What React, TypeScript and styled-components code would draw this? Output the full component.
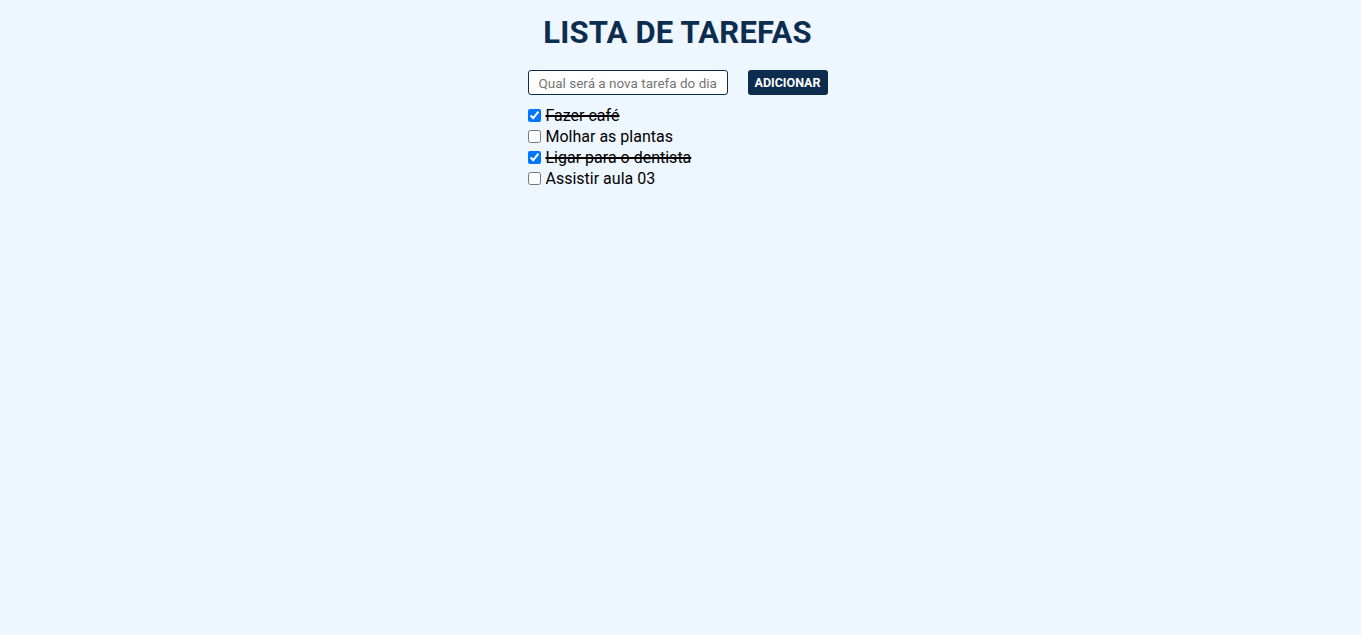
import React, { useState } from "react";
import styled, { createGlobalStyle } from "styled-components";

const Global = createGlobalStyle`
  html, body { margin: 0; padding: 0; background: #eef6ff; }
  body { font-family: Roboto, "Noto Sans", sans-serif; }
`;

const Page = styled.main`
  min-height: 635px;
  display: flex;
  flex-direction: column;
  align-items: center;
  padding-right: 6px;
`;

const Container = styled.div`
  width: 300px;
  display: flex;
  flex-direction: column;
`;

const Title = styled.h1`
  margin: 14px 0 0;
  text-align: center;
  font-size: 31px;
  line-height: 38px;
  font-weight: 700;
  color: #0c2d4e;
  letter-spacing: 0.2px;
`;

const Form = styled.form`
  display: flex;
  align-items: center;
  gap: 20px;
  margin-top: 18px;
`;

const Input = styled.input`
  box-sizing: border-box;
  width: 200px;
  height: 25px;
  border: 1px solid #0c2d4e;
  border-radius: 3px;
  background: #fff;
  padding: 0 10px;
  font-family: Roboto, sans-serif;
  font-size: 13.5px;
  color: #333;
  &::placeholder { color: #757575; }
`;

const Button = styled.button`
  box-sizing: border-box;
  width: 80px;
  height: 25px;
  border: none;
  border-radius: 3px;
  background: #0c2d4e;
  color: #fff;
  font-family: Roboto, sans-serif;
  font-size: 12.5px;
  font-weight: 700;
  padding: 0;
  cursor: pointer;
`;

const List = styled.ul`
  list-style: none;
  margin: 10px 0 0;
  padding: 0;
`;

const Item = styled.li<{ $done: boolean }>`
  display: flex;
  align-items: center;
  height: 21px;
  font-size: 16px;
  color: #000;
  text-decoration: ${(p) => (p.$done ? "line-through" : "none")};
  text-decoration-thickness: 1.5px;
`;

const Check = styled.input`
  margin: 0 5px 0 0;
  width: 13px;
  height: 13px;
`;

const initial = [
  { text: "Fazer café", done: true },
  { text: "Molhar as plantas", done: false },
  { text: "Ligar para o dentista", done: true },
  { text: "Assistir aula 03", done: false },
];

export default function App() {
  const [tasks, setTasks] = useState(initial);
  return (
    <>
      <Global />
      <Page>
        <Container>
          <Title>LISTA DE TAREFAS</Title>
          <Form onSubmit={(e) => e.preventDefault()}>
            <Input placeholder="Qual será a nova tarefa do dia" />
            <Button type="submit">ADICIONAR</Button>
          </Form>
          <List>
            {tasks.map((t, i) => (
              <Item key={i} $done={t.done}>
                <Check
                  type="checkbox"
                  checked={t.done}
                  onChange={() =>
                    setTasks(tasks.map((x, j) => (j === i ? { ...x, done: !x.done } : x)))
                  }
                />
                {t.text}
              </Item>
            ))}
          </List>
        </Container>
      </Page>
    </>
  );
}
